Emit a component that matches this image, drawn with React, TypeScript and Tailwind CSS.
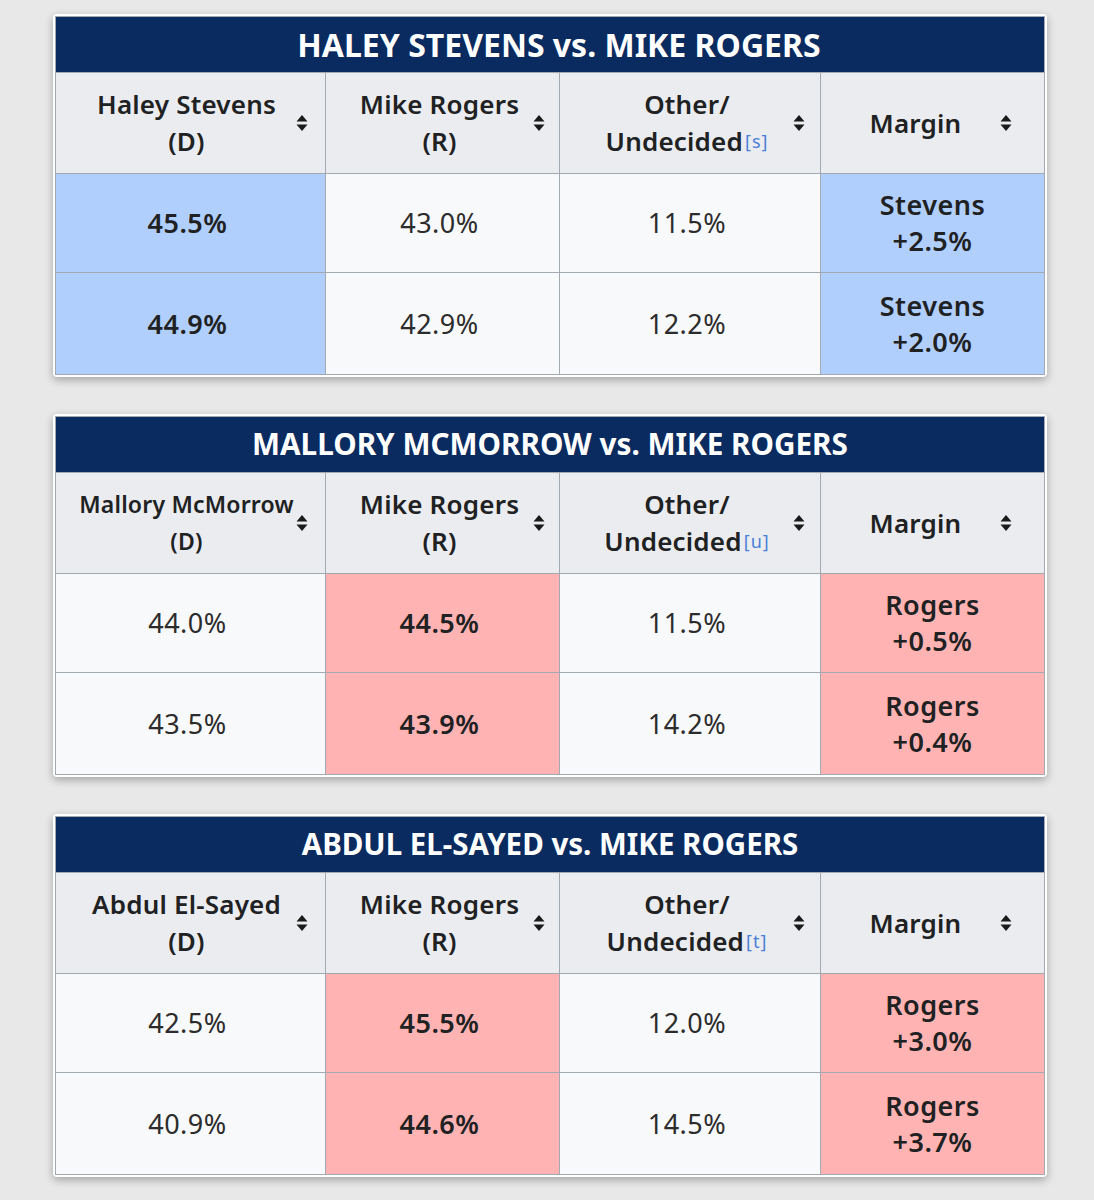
import React from "react"

type Cell = { text: string; sub?: string; win?: "d" | "r" }
type Poll = {
  title: string
  titleSize: string
  dem: string
  demSmall?: boolean
  note: string
  rows: Cell[][]
}

const polls: Poll[] = [
  {
    title: "HALEY STEVENS vs. MIKE ROGERS",
    titleSize: "text-[32px] pl-[18px]",
    dem: "Haley Stevens",
    note: "s",
    rows: [
      [{ text: "45.5%", win: "d" }, { text: "43.0%" }, { text: "11.5%" }, { text: "Stevens", sub: "+2.5%", win: "d" }],
      [{ text: "44.9%", win: "d" }, { text: "42.9%" }, { text: "12.2%" }, { text: "Stevens", sub: "+2.0%", win: "d" }],
    ],
  },
  {
    title: "MALLORY MCMORROW vs. MIKE ROGERS",
    titleSize: "text-[29.7px]",
    dem: "Mallory McMorrow",
    demSmall: true,
    note: "u",
    rows: [
      [{ text: "44.0%" }, { text: "44.5%", win: "r" }, { text: "11.5%" }, { text: "Rogers", sub: "+0.5%", win: "r" }],
      [{ text: "43.5%" }, { text: "43.9%", win: "r" }, { text: "14.2%" }, { text: "Rogers", sub: "+0.4%", win: "r" }],
    ],
  },
  {
    title: "ABDUL EL-SAYED vs. MIKE ROGERS",
    titleSize: "text-[29.5px]",
    dem: "Abdul El-Sayed",
    note: "t",
    rows: [
      [{ text: "42.5%" }, { text: "45.5%", win: "r" }, { text: "12.0%" }, { text: "Rogers", sub: "+3.0%", win: "r" }],
      [{ text: "40.9%" }, { text: "44.6%", win: "r" }, { text: "14.5%" }, { text: "Rogers", sub: "+3.7%", win: "r" }],
    ],
  },
]

function SortIcon({ className }: { className: string }) {
  return (
    <svg viewBox="0 0 12 18" className={`absolute top-1/2 -translate-y-1/2 w-[12px] h-[18px] ${className}`}>
      <path d="M6 1 L11.5 7.5 H0.5 Z" fill="#1a1a1a" />
      <path d="M6 17 L11.5 10.5 H0.5 Z" fill="#1a1a1a" />
    </svg>
  )
}

function PollTable({ poll }: { poll: Poll }) {
  const cellBase = "flex items-center justify-center text-center border-[#a2a9b1]"
  const headCell = `${cellBase} relative h-[102px] bg-[#eaecf0] border-b border-t font-semibold text-[26px] leading-[37px] tracking-[0.2px]`
  const bg = (c: Cell) => (c.win === "d" ? "bg-[#b1cffc]" : c.win === "r" ? "bg-[#ffb3b3]" : "bg-[#f8f9fa]")

  return (
    <div className="w-[994px] p-[2px] bg-white rounded-[4px] shadow-[0_3px_8px_rgba(0,0,0,0.3)]">
      <div className="border border-[#a2a9b1] bg-[#f8f9fa]">
        <div className={`h-[55px] bg-[#0a2b60] flex items-center justify-center text-white font-bold ${poll.titleSize}`}>
          {poll.title}
        </div>
        <div className="grid grid-cols-[270px_234px_261px_223px] text-[#202122]">
          <div className={`${headCell} border-r pr-[8px]`}>
            <div className={poll.demSmall ? "text-[23px]" : ""}>
              {poll.dem}
              <br />
              (D)
            </div>
            <SortIcon className="right-[17px]" />
          </div>
          <div className={`${headCell} border-r pr-[6px]`}>
            <div>
              Mike Rogers
              <br />
              (R)
            </div>
            <SortIcon className="right-[14px]" />
          </div>
          <div className={`${headCell} border-r pr-[6px]`}>
            <div>
              Other/
              <br />
              Undecided
              <sup className="text-[18px] text-[#4a7fd6] font-normal relative -top-[3px] ml-[2px] tracking-[1px]">[{poll.note}]</sup>
            </div>
            <SortIcon className="right-[15px]" />
          </div>
          <div className={`${headCell} pr-[34px]`}>
            <div>Margin</div>
            <SortIcon className="right-[32px]" />
          </div>
          {poll.rows.map((row, ri) =>
            row.map((c, ci) => (
              <div
                key={`${ri}-${ci}`}
                className={`${cellBase} ${bg(c)} ${ci < 3 ? "border-r pr-[6px]" : ""} ${ri === 0 ? "border-b h-[99px]" : "h-[101px]"} ${c.win ? "font-semibold" : "text-[#2c2c2c]"} text-[27px] leading-[36px] tracking-[0.5px]`}
              >
                <div>
                  {c.text}
                  {c.sub && (
                    <>
                      <br />
                      {c.sub}
                    </>
                  )}
                </div>
              </div>
            ))
          )}
        </div>
      </div>
    </div>
  )
}

export default function App() {
  return (
    <div
      className="min-h-[1200px] bg-[#e8e8e8] pt-[14px] pl-[53px] flex flex-col gap-[37px]"
      style={{ fontFamily: '"Noto Sans", "Open Sans", sans-serif' }}
    >
      {polls.map((p) => (
        <PollTable key={p.title} poll={p} />
      ))}
    </div>
  )
}
